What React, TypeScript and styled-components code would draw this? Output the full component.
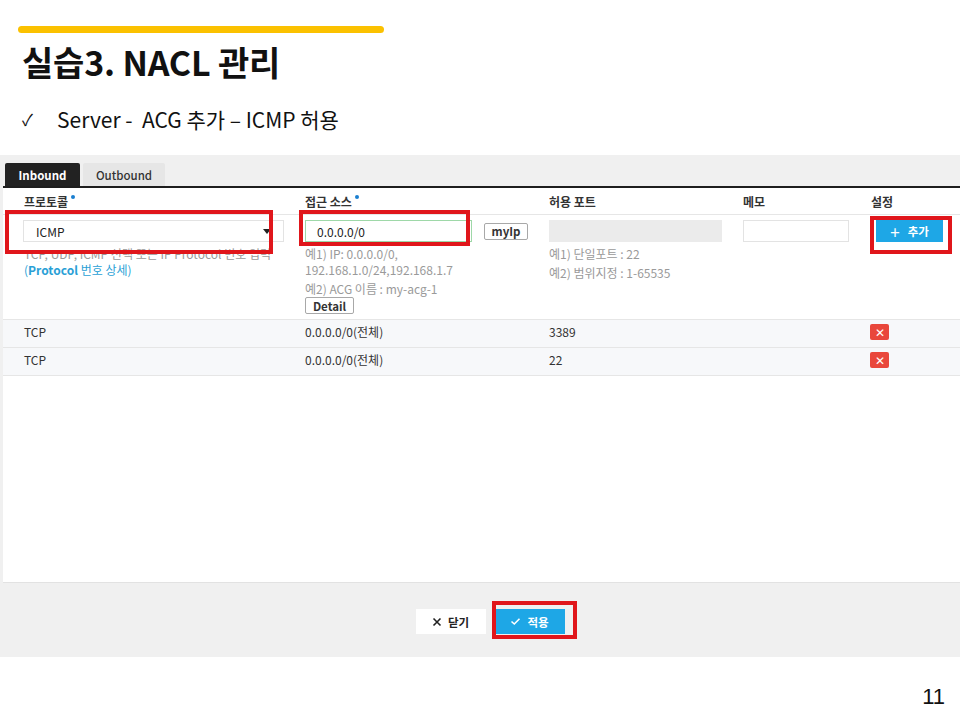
import React from 'react'
import styled, { createGlobalStyle } from 'styled-components'

const GlobalStyle = createGlobalStyle`
  html, body {
    margin: 0;
    padding: 0;
    background: #ffffff;
  }
  body {
    font-family: "Noto Sans CJK KR", "Noto Sans", sans-serif;
  }
`

const Slide = styled.div`
  position: relative;
  width: 960px;
  height: 720px;
  overflow: hidden;
  background: #ffffff;
  display: flex;
  flex-direction: column;
`

const AccentBar = styled.div`
  margin: 26px 0 0 18px;
  width: 366px;
  height: 7px;
  border-radius: 4px;
  background: #fbc100;
`

const Title = styled.h1`
  margin: 5px 0 0 22px;
  font-size: 34px;
  line-height: 48px;
  font-weight: 700;
  color: #111;
  letter-spacing: -0.2px;
`

const Bullet = styled.div`
  margin: 19px 0 0 22px;
  display: flex;
  align-items: center;
  gap: 20px;
  font-size: 21px;
  line-height: 28px;
  color: #111;
`

const Check = styled.span`
  font-size: 16px;
  width: 15px;
`

const Shot = styled.div`
  margin-top: 22px;
  height: 502px;
  background: #f0f0f0;
  display: flex;
  flex-direction: column;
`

const Tabs = styled.div`
  display: flex;
  gap: 3px;
  padding: 8px 0 0 5px;
  height: 23px;
`

const Tab = styled.div<{ $active?: boolean }>`
  width: ${(p) => (p.$active ? 75 : 82)}px;
  height: 23px;
  display: flex;
  align-items: center;
  justify-content: center;
  font-size: 11.5px;
  font-weight: ${(p) => (p.$active ? 700 : 500)};
  color: ${(p) => (p.$active ? '#ffffff' : '#333')};
  background: ${(p) => (p.$active ? '#222' : '#e6e6e6')};
  border-radius: 2px 2px 0 0;
`

const Panel = styled.div`
  margin-left: 3px;
  height: 394px;
  background: #ffffff;
  border-top: 2px solid #1e1e1e;
  box-shadow: 0 1px 0 #e2e2e2;
`

const Row = styled.div<{ $h: number; $bg?: string }>`
  display: grid;
  grid-template-columns: 281px 244px 194px 128px 1fr;
  padding-left: 21px;
  height: ${(p) => p.$h}px;
  background: ${(p) => p.$bg || '#ffffff'};
  border-bottom: 1px solid #e6e6e6;
  box-sizing: border-box;
`

const HeadCell = styled.div`
  display: flex;
  align-items: center;
  font-size: 12px;
  font-weight: 700;
  color: #333;
`

const Dot = styled.span`
  width: 4px;
  height: 4px;
  border-radius: 50%;
  background: #1a7fd0;
  margin: 0 0 8px 3px;
`

const FormCell = styled.div`
  padding-top: 5px;
  display: flex;
  flex-direction: column;
  align-items: flex-start;
`

const Line = styled.div`
  display: flex;
  align-items: center;
`

const Select = styled.div`
  width: 261px;
  height: 22px;
  margin-left: -1px;
  box-sizing: border-box;
  border: 1px solid #e3e3e3;
  display: flex;
  align-items: center;
  justify-content: space-between;
  padding: 0 12px 0 12px;
  font-size: 12px;
  color: #222;
`

const Caret = styled.span`
  width: 0;
  height: 0;
  border-left: 4px solid transparent;
  border-right: 4px solid transparent;
  border-top: 5px solid #222;
`

const Input = styled.div<{ $w: number; $border?: string; $bg?: string }>`
  width: ${(p) => p.$w}px;
  height: 22px;
  box-sizing: border-box;
  border: 1px solid ${(p) => p.$border || '#e3e3e3'};
  background: ${(p) => p.$bg || '#ffffff'};
  display: flex;
  align-items: center;
  padding-left: 11px;
  font-size: 12px;
  color: #222;
`

const SmallButton = styled.div<{ $w: number }>`
  width: ${(p) => p.$w}px;
  height: 17px;
  box-sizing: border-box;
  border: 1px solid #a8a8a8;
  border-radius: 2px;
  display: flex;
  align-items: center;
  justify-content: center;
  font-size: 11.5px;
  font-weight: 700;
  color: #333;
  background: #fff;
`

const Hint = styled.div<{ $gap?: number; $color?: string }>`
  margin-top: ${(p) => p.$gap ?? 0}px;
  font-size: 12px;
  line-height: 16px;
  color: ${(p) => p.$color || '#9a9a9a'};
  white-space: nowrap;
`

const AddButton = styled.div`
  margin-left: 5px;
  width: 67px;
  height: 22px;
  background: #1ea7e6;
  color: #fff;
  font-size: 11.5px;
  font-weight: 700;
  display: flex;
  align-items: center;
  justify-content: center;
  gap: 8px;
`

const Plus = styled.span`
  font-size: 17px;
  font-weight: 400;
  line-height: 1;
`

const Cell = styled.div`
  display: flex;
  align-items: center;
  padding-bottom: 4px;
  font-size: 12px;
  color: #333;
`

const DeleteButton = styled.div`
  margin-left: -1px;
  width: 19px;
  height: 16px;
  border-radius: 2px;
  background: #e9473b;
  color: #fff;
  display: flex;
  align-items: center;
  justify-content: center;
  font-size: 12px;
  line-height: 1;
`

const Footer = styled.div`
  flex: 1;
  display: flex;
  align-items: center;
  justify-content: center;
  gap: 9px;
  padding: 4px 0 0 20px;
`

const FooterButton = styled.div<{ $primary?: boolean }>`
  width: 70px;
  height: 25px;
  display: flex;
  align-items: center;
  justify-content: center;
  gap: 6px;
  font-size: 11.5px;
  font-weight: 700;
  background: ${(p) => (p.$primary ? '#1ea7e6' : '#ffffff')};
  color: ${(p) => (p.$primary ? '#ffffff' : '#222')};
`

const PageNumber = styled.div`
  position: absolute;
  right: 15px;
  bottom: 10px;
  font-family: "Liberation Sans", Arial, sans-serif;
  font-size: 22px;
  color: #111;
`

const Mark = styled.div<{ $x: number; $y: number; $w: number; $h: number }>`
  position: absolute;
  left: ${(p) => p.$x}px;
  top: ${(p) => p.$y}px;
  width: ${(p) => p.$w}px;
  height: ${(p) => p.$h}px;
  border: 4px solid #e0161b;
  box-sizing: border-box;
  pointer-events: none;
`

const rules = [
  { proto: 'TCP', source: '0.0.0.0/0(전체)', port: '3389' },
  { proto: 'TCP', source: '0.0.0.0/0(전체)', port: '22' },
]

const CloseIcon = () => (
  <svg width="10" height="10" viewBox="0 0 10 10">
    <path d="M1.5 1.5 L8.5 8.5 M8.5 1.5 L1.5 8.5" stroke="#222" strokeWidth="1.6" />
  </svg>
)

const CheckIcon = () => (
  <svg width="11" height="9" viewBox="0 0 11 9">
    <path d="M1.5 4.5 L4.3 7 L9.5 1.8" stroke="#fff" strokeWidth="1.6" fill="none" />
  </svg>
)

const App: React.FC = () => {
  return (
    <>
      <GlobalStyle />
      <Slide>
        <AccentBar />
        <Title>실습3. NACL 관리</Title>
        <Bullet>
          <Check>✓</Check>
          <span>Server - &nbsp;ACG 추가 – ICMP 허용</span>
        </Bullet>

        <Shot>
          <Tabs>
            <Tab $active>Inbound</Tab>
            <Tab>Outbound</Tab>
          </Tabs>
          <Panel>
            <Row $h={27}>
              <HeadCell>
                프로토콜<Dot />
              </HeadCell>
              <HeadCell>
                접근 소스<Dot />
              </HeadCell>
              <HeadCell>허용 포트</HeadCell>
              <HeadCell>메모</HeadCell>
              <HeadCell>설정</HeadCell>
            </Row>
            <Row $h={105}>
              <FormCell>
                <Select>
                  ICMP
                  <Caret />
                </Select>
                <Hint $gap={4}>TCP, UDP, ICMP 선택 또는 IP Protocol 번호 입력</Hint>
                <Hint $color="#2a9fd6">
                  (<b>Protocol</b> 번호 상세)
                </Hint>
              </FormCell>
              <FormCell>
                <Line>
                  <Input $w={167} $border="#9ed8a8">
                    0.0.0.0/0
                  </Input>
                  <SmallButton $w={44} style={{ marginLeft: 12 }}>
                    myIp
                  </SmallButton>
                </Line>
                <Hint $gap={4}>예1) IP: 0.0.0.0/0,</Hint>
                <Hint>192.168.1.0/24,192.168.1.7</Hint>
                <Hint $gap={3}>예2) ACG 이름 : my-acg-1</Hint>
                <SmallButton $w={49}>Detail</SmallButton>
              </FormCell>
              <FormCell>
                <Input $w={173} $border="#ebebeb" $bg="#ebebeb" />
                <Hint $gap={4}>예1) 단일포트 : 22</Hint>
                <Hint $gap={3}>예2) 범위지정 : 1-65535</Hint>
              </FormCell>
              <FormCell>
                <Input $w={106} />
              </FormCell>
              <FormCell>
                <AddButton>
                  <Plus>+</Plus>추가
                </AddButton>
              </FormCell>
            </Row>
            {rules.map((r, i) => (
              <Row key={i} $h={28} $bg="#f7f8fa">
                <Cell>{r.proto}</Cell>
                <Cell>{r.source}</Cell>
                <Cell>{r.port}</Cell>
                <Cell />
                <Cell>
                  <DeleteButton>✕</DeleteButton>
                </Cell>
              </Row>
            ))}
          </Panel>
          <Footer>
            <FooterButton>
              <CloseIcon />
              닫기
            </FooterButton>
            <FooterButton $primary>
              <CheckIcon />
              적용
            </FooterButton>
          </Footer>
        </Shot>

        <PageNumber>11</PageNumber>

        <Mark $x={5} $y={210} $w={268} $h={44} />
        <Mark $x={299} $y={210} $w={171} $h={36} />
        <Mark $x={870} $y={216} $w={82} $h={38} />
        <Mark $x={492} $y={601} $w={85} $h={38} />
      </Slide>
    </>
  )
}

export default App
